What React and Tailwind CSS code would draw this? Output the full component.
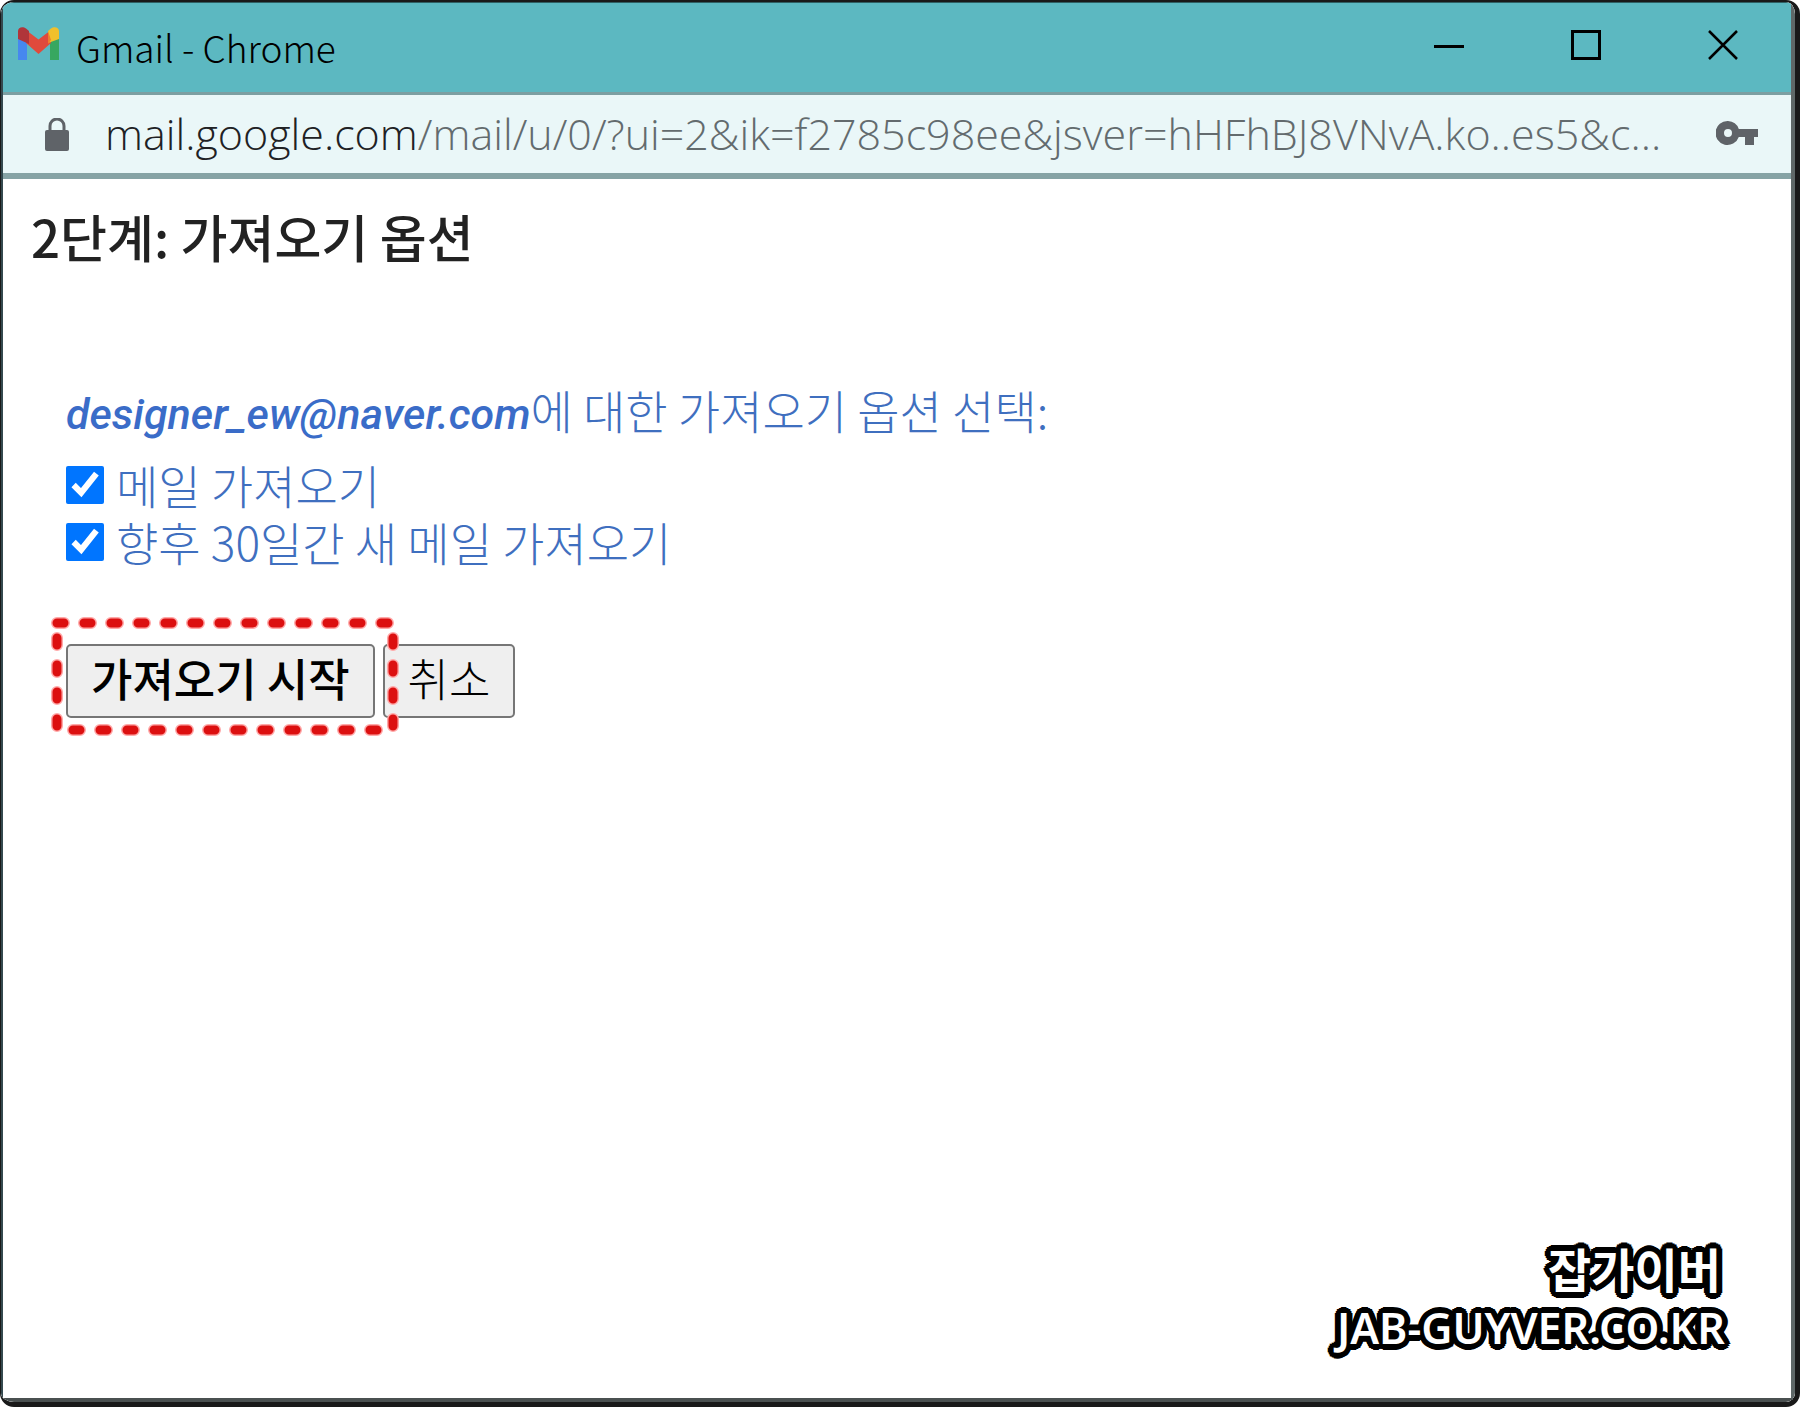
const OUTLINE =
  "[text-shadow:6px_0_#000,5px_2px_#000,4px_4px_#000,2px_5px_#000,0_6px_#000,-2px_5px_#000,-4px_4px_#000,-5px_2px_#000,-6px_0_#000,-5px_-2px_#000,-4px_-4px_#000,-2px_-5px_#000,0_-6px_#000,2px_-5px_#000,4px_-4px_#000,5px_-2px_#000,3px_0_#000,0_3px_#000,-3px_0_#000,0_-3px_#000]";

function GmailIcon() {
  return (
    <svg viewBox="0 0 43 33" className="mb-[7px] h-[33px] w-[43px] shrink-0" aria-hidden="true">
      <path d="M1 10h9v23H1z" fill="#4688ef" />
      <path d="M33 10h9v23h-9z" fill="#37a760" />
      <path d="M9 3l12.500 9.500L34 3v13l-12.500 11L9 16z" fill="#e04a3c" />
      <path d="M1 12V4c0-4 5-5 8-2.500L12 4v13z" fill="#b0353a" />
      <path d="M42 12V4c0-4-5-5-8-2.500L31 4v12z" fill="#f0c02c" />
      <path d="M31 4l3 9-3 4z" fill="#ee7f2c" />
    </svg>
  );
}

function LockIcon() {
  return (
    <svg viewBox="0 0 24 33" className="h-[33px] w-6 shrink-0" aria-hidden="true">
      <path d="M5 14V8a7 7 0 0 1 14 0v6" fill="none" stroke="#5f6368" strokeWidth="3" />
      <rect x="0" y="12" width="24" height="21" rx="2" fill="#5f6368" />
    </svg>
  );
}

function KeyIcon() {
  return (
    <svg viewBox="0 0 42 26" className="mb-[3px] h-[26px] w-[42px] shrink-0" aria-hidden="true">
      <path
        fillRule="evenodd"
        fill="#5f6368"
        d="M12 1a12 12 0 1 0 10.800 16H29v8h9v-8h4V9H22.800A12 12 0 0 0 12 1zm0 8a4 4 0 1 1 0 8 4 4 0 0 1 0-8z"
      />
    </svg>
  );
}

function WindowControls() {
  const button = "flex w-[137px] items-center justify-center";
  return (
    <div className="flex h-[84px] text-black">
      <button type="button" aria-label="최소화" className={button}>
        <svg viewBox="0 0 30 30" className="size-[30px]" fill="none" stroke="currentColor">
          <path d="M0 16.500h30" strokeWidth="3" />
        </svg>
      </button>
      <button type="button" aria-label="최대화" className={button}>
        <svg viewBox="0 0 30 30" className="size-[30px]" fill="none" stroke="currentColor">
          <rect x="1.500" y="1.500" width="27" height="27" strokeWidth="3" />
        </svg>
      </button>
      <button type="button" aria-label="닫기" className={button}>
        <svg viewBox="0 0 30 30" className="size-[30px]" fill="none" stroke="currentColor">
          <path d="M1 1l28 28M29 1L1 29" strokeWidth="2.500" />
        </svg>
      </button>
    </div>
  );
}

function Option({ id, children }) {
  return (
    <div className="flex h-[57px] items-center gap-3">
      <input id={id} type="checkbox" defaultChecked className="size-[38px] accent-[#0075ff]" />
      <label htmlFor={id} className="pb-[2px]">{children}</label>
    </div>
  );
}

export default function App() {
  return (
    <div className="flex min-h-screen flex-col overflow-hidden rounded-[14px] border-t-2 border-r-[5px] border-b-[5px] border-l border-[#191919] bg-[#191919] font-['Noto_Sans_CJK_KR',sans-serif]">
      <div className="flex grow flex-col border-t border-r-4 border-b-4 border-l-2 border-t-[#2f5f63] border-r-[#5f6868] border-b-[#4a5050] border-l-[#34494f] bg-white">
        <header className="flex h-[92px] items-start justify-between border-b-[3px] border-[#7c9fa2] bg-[#5cb8c1]">
          <div className="flex h-[88px] items-center gap-4 pl-[14px]">
            <GmailIcon />
            <h1 className="text-[37px] leading-[56px] font-light text-black">Gmail - Chrome</h1>
          </div>
          <WindowControls />
        </header>

        <div className="flex h-[84px] items-center border-b-[6px] border-[#86a3a5] bg-[#eaf7f8] pr-[33px] pl-[42px]">
          <LockIcon />
          <p className="ml-9 grow truncate font-['Open_Sans','Noto_Sans',sans-serif] text-[43px] leading-[60px] font-light text-[#636b6e]">
            <span className="text-[#202124]">mail.google.com</span>
            /mail/u/0/?ui=2&amp;ik=f2785c98ee&amp;jsver=hHFhBJ8VNvA.ko..es5&amp;c...
          </p>
          <KeyIcon />
        </div>

        <main className="flex grow flex-col pt-6 pr-[66px] pb-[40px] pl-[28px]">
          <h2 className="text-[51px] leading-[66px] font-medium text-[#222]">2단계: 가져오기 옵션</h2>

          <form className="mt-[108px] pl-[35px] text-[46px] leading-[64px] font-light text-[#3f6fbf]" onSubmit={(e) => e.preventDefault()}>
            <p>
              <em className="font-['Roboto',sans-serif] text-[43px] font-medium text-[#3a6cc8]">designer_ew@naver.com</em>
              에 대한 가져오기 옵션 선택:
            </p>
            <div className="mt-[10px]">
              <Option id="import-mail">메일 가져오기</Option>
              <Option id="import-new">향후 30일간 새 메일 가져오기</Option>
            </div>

            <div className="mt-[74px] flex gap-2 text-[45px] leading-[64px] text-black">
              <div className="relative">
                <button type="submit" className="h-[74px] rounded-[5px] border-2 border-[#767676] bg-[#efefef] px-[23px] pb-[6px] font-medium">
                  가져오기 시작
                </button>
                <svg viewBox="0 0 350 122" className="pointer-events-none absolute -top-[28px] -left-[16px] z-10 h-[122px] w-[350px]" aria-hidden="true">
                  <g fill="none" strokeLinecap="round" strokeDasharray="7 20">
                    <path d="M7 7H343V114H7z" stroke="#ffa8a8" strokeWidth="12" />
                    <path d="M7 7H343V114H7z" stroke="#dc1010" strokeWidth="9" />
                  </g>
                </svg>
              </div>
              <button type="button" className="h-[74px] rounded-[5px] border-2 border-[#767676] bg-[#efefef] px-[23px] pb-[6px]">
                취소
              </button>
            </div>
          </form>

          <footer className={`mt-auto text-right text-white ${OUTLINE}`}>
            <p className="pr-1 text-[47px] leading-[60px] font-bold">잡가이버</p>
            <p className="font-['Noto_Sans',sans-serif] text-[43px] leading-[60px] font-semibold">JAB-GUYVER.CO.KR</p>
          </footer>
        </main>
      </div>
    </div>
  );
}
